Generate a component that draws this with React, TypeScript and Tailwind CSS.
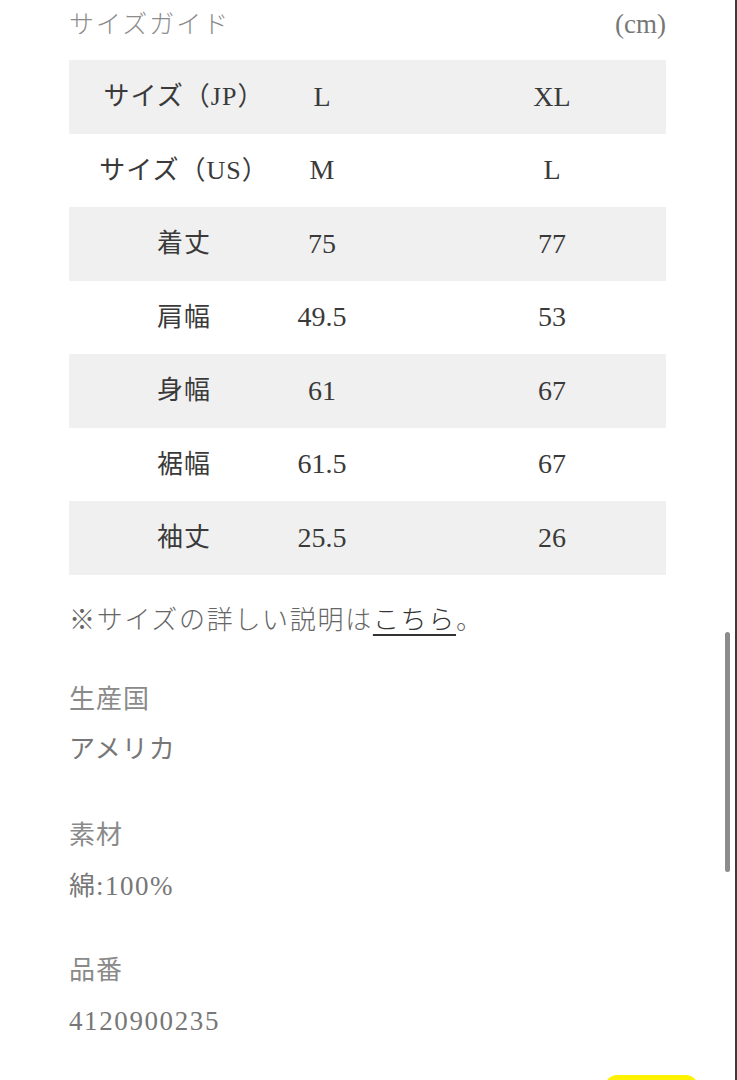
import React from "react";

const rows: { label: string; a: string; b: string; gray: boolean }[] = [
  { label: "サイズ（JP）", a: "L", b: "XL", gray: true },
  { label: "サイズ（US）", a: "M", b: "L", gray: false },
  { label: "着丈", a: "75", b: "77", gray: true },
  { label: "肩幅", a: "49.5", b: "53", gray: false },
  { label: "身幅", a: "61", b: "67", gray: true },
  { label: "裾幅", a: "61.5", b: "67", gray: false },
  { label: "袖丈", a: "25.5", b: "26", gray: true },
];

const serif = "font-['Liberation_Serif','Noto_Sans_CJK_JP',serif]";

export default function App() {
  return (
    <div className="relative w-[737px] h-[1080px] overflow-hidden bg-white border-r-2 border-[#3a3a3a]">
      <div className="pl-[69px] w-[666px]">
        <div className="h-[60px] flex justify-between items-start pt-[5px]">
          <span className="font-['Noto_Sans_CJK_JP',sans-serif] text-[25px] leading-[34px] tracking-[2px] text-[#8c8c8c] font-light">
            サイズガイド
          </span>
          <span className={`${serif} text-[27px] leading-[38px] text-[#777]`}>(cm)</span>
        </div>
        <div className="flex flex-col">
          {rows.map((r) => (
            <div
              key={r.label}
              className={`flex items-center h-[73.5px] ${r.gray ? "bg-[#f0f0f0]" : "bg-white"} ${serif} text-[#3a3a3a]`}
            >
              <div className="w-[230px] flex justify-center text-[26px] tracking-[1px]">{r.label}</div>
              <div className="w-[46px] flex justify-center text-[28px]">{r.a}</div>
              <div className="ml-auto w-[228px] flex justify-center text-[28px]">{r.b}</div>
            </div>
          ))}
        </div>
        <p className="mt-[23px] font-['Noto_Sans_CJK_JP',sans-serif] font-light text-[26px] leading-[40px] tracking-[1.7px] text-[#666]">
          ※サイズの詳しい説明は
          <span className="text-[#333] underline underline-offset-[5px] decoration-[2px]">こちら</span>。
        </p>
        <div className={`${serif} text-[26px] tracking-[1px] leading-[50px]`}>
          <div className="mt-[37px] text-[#8a8a8a]">生産国</div>
          <div className="text-[#777]">アメリカ</div>
          <div className="mt-[36px] text-[#8a8a8a]">素材</div>
          <div className="text-[#777]">
            綿<span className="text-[27px] tracking-[1.5px]">:100%</span>
          </div>
          <div className="mt-[34px] text-[#8a8a8a]">品番</div>
          <div className="text-[#777] text-[27px] tracking-[1.6px]">4120900235</div>
        </div>
      </div>
      <div className="absolute left-[725px] top-[632px] w-[5px] h-[240px] rounded-full bg-[#8c8c8c]" />
      <div className="absolute left-[605px] top-[1075px] w-[93px] h-[24px] rounded-full bg-[#fff200]" />
    </div>
  );
}
